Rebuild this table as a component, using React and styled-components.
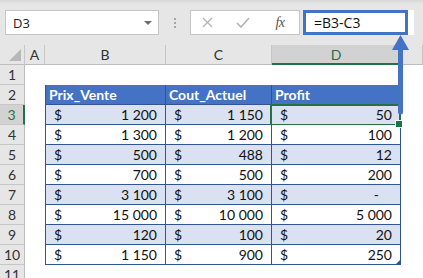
import React from "react";
import styled, { createGlobalStyle, css } from "styled-components";

const GlobalStyle = createGlobalStyle`
  html, body { margin: 0; padding: 0; background: #ffffff; }
  body { width: 423px; height: 278px; overflow: hidden; }
  * { box-sizing: border-box; }
`;

const Page = styled.div`
  position: relative;
  width: 423px;
  height: 278px;
  overflow: hidden;
  background: #ffffff;
`;

const FormulaBar = styled.div`
  display: flex;
  align-items: flex-start;
  height: 45px;
  padding: 10px 0 0 5px;
  background: linear-gradient(#d8d8d8 0px, #e6e6e6 4px, #e6e6e6 100%);
  font-family: "Open Sans", "Noto Sans", sans-serif;
  font-size: 13px;
  color: #222;
`;

const NameBox = styled.div`
  position: relative;
  display: flex;
  align-items: center;
  width: 154px;
  height: 25px;
  padding-left: 7px;
  background: #fff;
  border: 1px solid #c6c6c6;
`;

const Caret = styled.span`
  position: absolute;
  right: 6px;
  top: 10px;
  width: 0;
  height: 0;
  border-left: 4px solid transparent;
  border-right: 4px solid transparent;
  border-top: 4px solid #707070;
`;

const Dots = styled.div`
  display: flex;
  flex-direction: column;
  align-items: center;
  justify-content: center;
  gap: 2px;
  width: 31px;
  height: 25px;
  & > span {
    width: 2px;
    height: 2px;
    background: #a6a6a6;
  }
`;

const ButtonsBox = styled.div`
  display: flex;
  align-items: center;
  width: 110px;
  height: 25px;
  background: #fff;
  border: 1px solid #c6c6c6;
`;

const IconSlot = styled.span`
  display: flex;
  align-items: center;
  justify-content: center;
  width: ${(p) => p.$w}px;
  height: 100%;
`;

const Fx = styled.span`
  font-family: "Liberation Serif", "DejaVu Serif", serif;
  font-style: italic;
  font-size: 14px;
  color: #555;
  letter-spacing: -0.5px;
`;

const FormulaField = styled.div`
  display: flex;
  width: 111px;
  height: 25px;
  margin-left: 3px;
  background: #fff;
`;

const FormulaHighlight = styled.div`
  display: flex;
  align-items: center;
  width: 105px;
  height: 25px;
  padding-left: 8px;
  border: 3px solid #4472c4;
  font-size: 14px;
  color: #111;
`;

const Sheet = styled.div`
  display: grid;
  grid-template-columns: 25px 20px 121px 106px 129px 1fr;
  grid-auto-rows: 20px;
  font-family: "Lato", "Liberation Sans", sans-serif;
  font-size: 14px;
  color: #111;
`;

const headerBase = css`
  display: flex;
  align-items: center;
  justify-content: center;
  background: #e6e6e6;
  color: #333;
  font-size: 14px;
`;

const Corner = styled.div`
  ${headerBase};
  position: relative;
  border-right: 1px solid #c6c6c6;
  border-bottom: 1px solid #bdbdbd;
  &::after {
    content: "";
    position: absolute;
    right: 3px;
    bottom: 3px;
    width: 0;
    height: 0;
    border-left: 12px solid transparent;
    border-bottom: 12px solid #b8b8b8;
  }
`;

const ColHeader = styled.div`
  ${headerBase};
  border-right: 1px solid #c6c6c6;
  border-bottom: 1px solid #bdbdbd;
  ${(p) =>
    p.$active &&
    css`
      background: #d2d2d2;
      color: #217346;
      border-bottom: 2px solid #217346;
    `}
`;

const RowHeader = styled.div`
  ${headerBase};
  border-right: 1px solid #bdbdbd;
  border-bottom: 1px solid #c6c6c6;
  ${(p) =>
    p.$active &&
    css`
      background: #d2d2d2;
      color: #217346;
      border-right: 2px solid #217346;
    `}
`;

const Blank = styled.div`
  background: #fff;
`;

const TableHead = styled.div`
  display: flex;
  align-items: flex-end;
  padding: 0 0 1px 3px;
  background: #4472c4;
  color: #fff;
  font-weight: 700;
  border-bottom: 1px solid #2f5597;
  ${(p) => p.$first && css`border-left: 1px solid #2f5597;`}
  ${(p) => !p.$last && css`border-right: 1px solid #2f5597;`}
  ${(p) => p.$last && css`border-right: 1px solid #2f5597;`}
`;

const TableCell = styled.div`
  position: relative;
  display: flex;
  align-items: flex-end;
  justify-content: space-between;
  padding: 0 ${(p) => p.$pr}px 1px 8px;
  background: ${(p) => (p.$band ? "#d9e1f2" : "#ffffff")};
  border-right: 1px solid #2f5597;
  border-bottom: 1px solid #2f5597;
  ${(p) => p.$first && css`border-left: 1px solid #2f5597;`}
  ${(p) =>
    p.$selected &&
    css`
      &::after {
        content: "";
        position: absolute;
        left: -2px;
        top: -1px;
        right: -1px;
        bottom: -2px;
        border: 2px solid #217346;
      }
      &::before {
        content: "";
        position: absolute;
        right: -3px;
        bottom: -4px;
        width: 6px;
        height: 6px;
        background: #217346;
        border: 1px solid #fff;
        z-index: 2;
      }
    `}
  ${(p) =>
    p.$corner &&
    css`
      &::after {
        content: "";
        position: absolute;
        right: 0;
        bottom: 0;
        border-left: 4px solid transparent;
        border-bottom: 4px solid #2f5597;
      }
    `}
`;

const Value = styled.span`
  padding-right: ${(p) => (p.$dash ? 13 : 0)}px;
`;

const ArrowLayer = styled.svg`
  position: absolute;
  left: 0;
  top: 0;
  pointer-events: none;
`;

const B = ["1 200", "1 300", "500", "700", "3 100", "15 000", "120", "1 150"];
const C = ["1 150", "1 200", "488", "500", "3 100", "10 000", "100", "900"];
const D = ["50", "100", "12", "200", "-", "5 000", "20", "250"];

export default function App() {
  const dataRows = B.map((b, i) => ({ b, c: C[i], d: D[i], n: i + 3 }));
  return (
    <Page>
      <GlobalStyle />
      <FormulaBar>
        <NameBox>
          D3
          <Caret />
        </NameBox>
        <Dots>
          <span />
          <span />
          <span />
        </Dots>
        <ButtonsBox>
          <IconSlot $w={32}>
            <svg width="11" height="11" viewBox="0 0 11 11">
              <path d="M1 1 L10 10 M10 1 L1 10" stroke="#b4b4b4" strokeWidth="1.3" fill="none" />
            </svg>
          </IconSlot>
          <IconSlot $w={40}>
            <svg width="14" height="11" viewBox="0 0 14 11">
              <path d="M1 6 L5 10 L13 1" stroke="#b4b4b4" strokeWidth="1.6" fill="none" />
            </svg>
          </IconSlot>
          <IconSlot $w={34}>
            <Fx>fx</Fx>
          </IconSlot>
        </ButtonsBox>
        <FormulaField>
          <FormulaHighlight>=B3-C3</FormulaHighlight>
        </FormulaField>
      </FormulaBar>
      <Sheet>
        <Corner />
        <ColHeader>A</ColHeader>
        <ColHeader>B</ColHeader>
        <ColHeader>C</ColHeader>
        <ColHeader $active>D</ColHeader>
        <ColHeader />

        <RowHeader>1</RowHeader>
        <Blank />
        <Blank />
        <Blank />
        <Blank />
        <Blank />

        <RowHeader>2</RowHeader>
        <Blank />
        <TableHead $first>Prix_Vente</TableHead>
        <TableHead>Cout_Actuel</TableHead>
        <TableHead $last>Profit</TableHead>
        <Blank />

        {dataRows.map((r, i) => (
          <React.Fragment key={r.n}>
            <RowHeader $active={r.n === 3}>{r.n}</RowHeader>
            <Blank />
            <TableCell $first $band={i % 2 === 0} $pr={8}>
              <span>$</span>
              <Value>{r.b}</Value>
            </TableCell>
            <TableCell $band={i % 2 === 0} $pr={8}>
              <span>$</span>
              <Value>{r.c}</Value>
            </TableCell>
            <TableCell
              $band={i % 2 === 0}
              $pr={8}
              $selected={r.n === 3}
              $corner={r.n === 10}
            >
              <span>$</span>
              <Value $dash={r.d === "-"}>{r.d}</Value>
            </TableCell>
            <Blank />
          </React.Fragment>
        ))}

        <RowHeader>11</RowHeader>
        <Blank />
        <Blank />
        <Blank />
        <Blank />
        <Blank />
      </Sheet>
      <ArrowLayer width="423" height="278" viewBox="0 0 423 278">
        <line x1="400.5" y1="48" x2="400.5" y2="112" stroke="#4472c4" strokeWidth="5" strokeLinecap="round" />
        <polygon points="392,50 409,50 400.5,35" fill="#4472c4" />
      </ArrowLayer>
    </Page>
  );
}
